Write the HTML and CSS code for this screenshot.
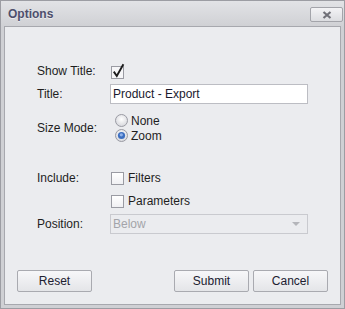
FILE: index.html
```html
<!DOCTYPE html>
<html lang="en">
<head>
    <meta charset="UTF-8">
    <title>Options</title>
    <link rel="stylesheet" href="styles.css">
</head>
<body>
    <div class="window">
        <div class="titlebar">
            <span class="caption">Options</span>
            <span class="close-btn">
                <svg width="10" height="8" viewBox="0 0 10 8"><path d="M1.5 1 L8.5 7 M8.5 1 L1.5 7" stroke="#707078" stroke-width="2.2" fill="none"/></svg>
            </span>
        </div>

        <div class="panel">
            <div class="form">
                <div class="row row-show">
                    <span class="label">Show Title:</span>
                    <span class="check">
                        <svg width="16" height="16" viewBox="0 0 16 16">
                            <rect x="0.5" y="3.5" width="12" height="12" fill="#f6f6f8" stroke="#9a9ba3"/>
                            <path d="M2.8 8.6 L5.8 13 L12.4 1.2" stroke="#1c1c1c" stroke-width="1.9" fill="none"/>
                        </svg>
                    </span>
                </div>

                <div class="row row-title">
                    <span class="label">Title:</span>
                    <div class="textbox">Product - Export</div>
                </div>

                <div class="row row-size">
                    <span class="label">Size Mode:</span>
                    <div class="radios">
                        <div class="radio">
                            <svg width="13" height="13" viewBox="0 0 13 13">
                                <defs>
                                    <radialGradient id="rg" cx="50%" cy="40%" r="60%">
                                        <stop offset="0" stop-color="#ffffff"/>
                                        <stop offset="1" stop-color="#d6d7dc"/>
                                    </radialGradient>
                                </defs>
                                <circle cx="6.5" cy="6.5" r="6" fill="url(#rg)" stroke="#9a9ba3"/>
                            </svg>
                            <span>None</span>
                        </div>
                        <div class="radio">
                            <svg width="13" height="13" viewBox="0 0 13 13">
                                <circle cx="6.5" cy="6.5" r="6" fill="url(#rg)" stroke="#9a9ba3"/>
                                <circle cx="6.5" cy="6.5" r="3.6" fill="#3d6fc0"/>
                                <circle cx="6.3" cy="5.8" r="1.6" fill="#8fb2ea"/>
                            </svg>
                            <span>Zoom</span>
                        </div>
                    </div>
                </div>

                <div class="row row-include">
                    <span class="label">Include:</span>
                    <span class="box"></span>
                    <span class="opt">Filters</span>
                </div>

                <div class="row row-params">
                    <span class="label"></span>
                    <span class="box"></span>
                    <span class="opt">Parameters</span>
                </div>

                <div class="row row-position">
                    <span class="label">Position:</span>
                    <div class="combo">
                        <span>Below</span>
                        <svg width="8" height="5" viewBox="0 0 8 5"><path d="M0 0 L8 0 L4 4 Z" fill="#b4b5ba"/></svg>
                    </div>
                </div>
            </div>

            <div class="buttons">
                <span class="btn">Reset</span>
                <span class="spacer"></span>
                <span class="btn">Submit</span>
                <span class="btn">Cancel</span>
            </div>
        </div>
    </div>
</body>
</html>
```

FILE: styles.css
```css
body {
    margin: 0;
    font-family: "Liberation Sans", Arial, sans-serif;
    font-size: 12px;
    color: #1e1e1e;
}
.window {
    width: 345px;
    height: 309px;
    box-sizing: border-box;
    border: 1px solid #9c9da3;
    background: linear-gradient(#e2e3e6, #cfd0d4 26px, #cfd0d4);
    padding: 0 3px 3px 3px;
    display: flex;
    flex-direction: column;
}
.titlebar {
    height: 25px;
    display: flex;
    align-items: center;
    justify-content: space-between;
    padding-left: 4px;
}
.caption {
    font-weight: bold;
    color: #4e4f6c;
    text-shadow: 0 1px 0 rgba(255, 255, 255, 0.5);
    margin-top: 1px;
}
.close-btn {
    width: 31px;
    height: 13px;
    border: 1px solid #a3a4aa;
    border-radius: 2px;
    background: linear-gradient(#f3f3f5, #dcdde1);
    display: flex;
    align-items: center;
    justify-content: center;
    margin-right: -2px;
    margin-top: 2px;
}
.panel {
    flex: 1;
    background: #ebecef;
    border: 1px solid #a7a8ae;
    display: flex;
    flex-direction: column;
    padding: 0 12px 12px 12px;
}
.form {
    padding: 36px 0 0 20px;
}
.row {
    display: flex;
    align-items: center;
}
.label {
    width: 73px;
    flex-shrink: 0;
}
.row-show {
    height: 16px;
}
.row-show .check {
    display: flex;
    margin-left: 1px;
}
.row-title {
    height: 20px;
    margin-top: 5px;
}
.textbox {
    width: 198px;
    height: 20px;
    box-sizing: border-box;
    background: #fff;
    border: 1px solid #bcbdc3;
    padding-left: 2px;
    line-height: 18px;
    color: #1a1a2e;
}
.row-size {
    height: 30px;
    margin-top: 9px;
}
.radios {
    margin-left: 5px;
}
.radio {
    height: 15px;
    display: flex;
    align-items: center;
    gap: 3px;
}
.radio svg {
    display: block;
}
.row-include {
    height: 16px;
    margin-top: 27px;
}
.row-params {
    height: 16px;
    margin-top: 7px;
}
.box {
    width: 11px;
    height: 11px;
    margin-left: 1px;
    border: 1px solid #9a9ba3;
    background: linear-gradient(#ffffff, #f0f0f3);
    flex-shrink: 0;
}
.opt {
    margin-left: 4px;
}
.row-position {
    height: 20px;
    margin-top: 5px;
}
.combo {
    width: 198px;
    height: 20px;
    box-sizing: border-box;
    border: 1px solid #c9cacf;
    padding: 0 7px 0 2px;
    display: flex;
    align-items: center;
    justify-content: space-between;
    color: #a3a4a9;
}
.buttons {
    margin-top: auto;
    display: flex;
    gap: 4px;
}
.spacer {
    flex: 1;
}
.btn {
    width: 75px;
    height: 22px;
    box-sizing: border-box;
    border: 1px solid #a9aab0;
    border-radius: 2px;
    background: linear-gradient(#f7f7f9, #e4e5e8);
    display: flex;
    align-items: center;
    justify-content: center;
    color: #202030;
}
```
